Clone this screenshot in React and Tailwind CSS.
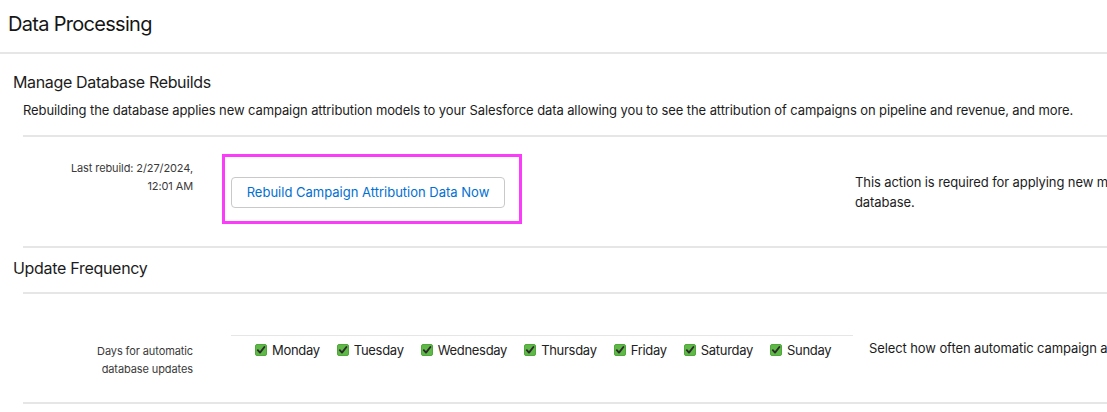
import React from "react";

const days = ["Monday", "Tuesday", "Wednesday", "Thursday", "Friday", "Saturday", "Sunday"];

function Check() {
  return (
    <span className="inline-flex w-[12px] h-[12px] rounded-[2px] bg-[#5fb847] border border-[#4fa83a] items-center justify-center shrink-0">
      <svg width="10" height="10" viewBox="0 0 10 10">
        <path d="M1.8 5.2 L4 7.6 L8.4 2" fill="none" stroke="#2b2b2b" strokeWidth="1.9" strokeLinecap="round" strokeLinejoin="round" />
      </svg>
    </span>
  );
}

export default function App() {
  return (
    <div
      className="w-[1107px] h-[412px] overflow-hidden bg-white text-[#222]"
      style={{ fontFamily: "Inter, 'Noto Sans', sans-serif" }}
    >
      <div className="w-[1400px]">
        <div className="pl-[8px] pt-[10px] pb-[14px] text-[20px] leading-[28px] tracking-[-0.7px] text-[#161616] border-b-2 border-[#e6e6e6]">
          Data Processing
        </div>
        <div className="pl-[13px] pt-[17px] text-[16px] leading-[22px] tracking-[-0.35px] text-[#1c1c1c]">Manage Database Rebuilds</div>
        <div className="pl-[23px] pt-[8px] text-[13px] leading-[18px] tracking-[-0.1px] text-[#1c1c1c] whitespace-nowrap">
          Rebuilding the database applies new campaign attribution models to your Salesforce data allowing you to see the attribution of campaigns on pipeline and revenue, and more.
        </div>
        <div className="ml-[23px] mt-[16px] border-t-2 border-b-2 border-[#e6e6e6] h-[113px] flex items-start">
          <div className="w-[170px] pt-[22px] text-right text-[11px] leading-[18px] tracking-[-0.1px] text-[#3a3a3a]">
            Last rebuild: 2/27/2024,
            <br />
            12:01 AM
          </div>
          <div className="ml-[29px] mt-[17px] border-[3px] border-[#fb3cfb] pl-[6px] pt-[20px] pb-[13px] pr-[14px]">
            <button className="w-[274px] h-[31px] border border-[#c9c9c9] rounded-[4px] bg-white text-[#0070d2] text-[13px]">
              Rebuild Campaign Attribution Data Now
            </button>
          </div>
          <div className="ml-[333px] pt-[35px] text-[13px] leading-[20px] tracking-[-0.1px] text-[#1c1c1c] whitespace-nowrap">
            This action is required for applying new models and settings to your
            <br />
            database.
          </div>
        </div>
        <div className="pl-[13px] pt-[9px] text-[16px] leading-[22px] tracking-[-0.3px] text-[#1c1c1c]">Update Frequency</div>
        <div className="ml-[23px] mt-[13px] border-t-2 border-b-2 border-[#e6e6e6] h-[112px] flex items-start">
          <div className="w-[170px] pt-[48px] text-right text-[11px] leading-[18px] tracking-[-0.1px] text-[#3a3a3a]">
            Days for automatic
            <br />
            database updates
          </div>
          <div className="ml-[38px] mt-[41px] w-[622px] border-t border-[#e6e6e6] pl-[24px] pt-[4px] flex items-center gap-[17px]">
            {days.map((d) => (
              <label key={d} className="flex items-center gap-[5px] text-[13px] leading-[20px] tracking-[-0.3px] text-[#222]">
                <Check />
                <span>{d}</span>
              </label>
            ))}
          </div>
          <div className="ml-[16px] pt-[44px] text-[13px] leading-[20px] tracking-[-0.1px] text-[#1c1c1c] whitespace-nowrap">
            Select how often automatic campaign attribution database updates should run.
          </div>
        </div>
      </div>
    </div>
  );
}
